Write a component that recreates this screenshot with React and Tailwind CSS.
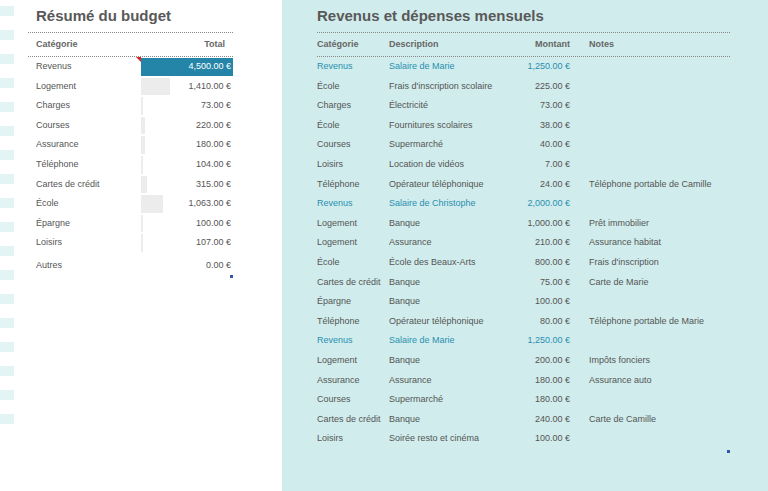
const left = [
  ["Revenus", 4500, "4,500.00 €"],
  ["Logement", 1410, "1,410.00 €"],
  ["Charges", 73, "73.00 €"],
  ["Courses", 220, "220.00 €"],
  ["Assurance", 180, "180.00 €"],
  ["Téléphone", 104, "104.00 €"],
  ["Cartes de crédit", 315, "315.00 €"],
  ["École", 1063, "1,063.00 €"],
  ["Épargne", 100, "100.00 €"],
  ["Loisirs", 107, "107.00 €"],
];
const right = [
  ["Revenus", "Salaire de Marie", "1,250.00 €", "", 1],
  ["École", "Frais d'inscription scolaire", "225.00 €", ""],
  ["Charges", "Électricité", "73.00 €", ""],
  ["École", "Fournitures scolaires", "38.00 €", ""],
  ["Courses", "Supermarché", "40.00 €", ""],
  ["Loisirs", "Location de vidéos", "7.00 €", ""],
  ["Téléphone", "Opérateur téléphonique", "24.00 €", "Téléphone portable de Camille"],
  ["Revenus", "Salaire de Christophe", "2,000.00 €", "", 1],
  ["Logement", "Banque", "1,000.00 €", "Prêt immobilier"],
  ["Logement", "Assurance", "210.00 €", "Assurance habitat"],
  ["École", "École des Beaux-Arts", "800.00 €", "Frais d'inscription"],
  ["Cartes de crédit", "Banque", "75.00 €", "Carte de Marie"],
  ["Épargne", "Banque", "100.00 €", ""],
  ["Téléphone", "Opérateur téléphonique", "80.00 €", "Téléphone portable de Marie"],
  ["Revenus", "Salaire de Marie", "1,250.00 €", "", 1],
  ["Logement", "Banque", "200.00 €", "Impôts fonciers"],
  ["Assurance", "Assurance", "180.00 €", "Assurance auto"],
  ["Courses", "Supermarché", "180.00 €", ""],
  ["Cartes de crédit", "Banque", "240.00 €", "Carte de Camille"],
  ["Loisirs", "Soirée resto et cinéma", "100.00 €", ""],
];
const F = { fontFamily: "Arial, 'Liberation Sans', sans-serif" };
export default function App() {
  return (
    <div className="w-[768px] h-[491px] flex bg-white overflow-hidden text-[9px] text-[#555]" style={F}>
      <div className="w-[16px] flex flex-col gap-[14px] pt-[6px]">
        {Array.from({ length: 18 }).map((_, i) => (
          <div key={i} className="h-[10px] w-[14px] bg-[#e3f4f4]" />
        ))}
      </div>
      <div className="w-[266px] pl-[12px] pr-[49px] pt-[6px]">
        <div className="text-[15px] font-bold text-[#595959] h-[26px] leading-[20px] pl-[8px]">Résumé du budget</div>
        <div className="border-t border-dotted border-[#888] flex justify-between font-bold h-[24px] items-center px-[8px] text-[#666]">
          <span>Catégorie</span><span>Total</span>
        </div>
        <div className="border-t border-dotted border-[#888]">
          {left.map(([c, v, s], i) => (
            <div key={c} className="flex h-[19.6px] items-center">
              <span className="w-[113px] pl-[8px]">{c}</span>
              <div className="relative flex-1 h-full flex items-center justify-end pr-[2px]">
                <div className={`absolute left-0 top-[1px] bottom-[1px] ${i === 0 ? "bg-[#2585a8]" : "bg-[#ececec]"}`} style={{ width: Math.max(2, (v / 4500) * 92) }} />
                {i === 0 && <div className="absolute left-[-5px] top-0 w-0 h-0 border-l-[5px] border-l-transparent border-t-[5px] border-t-[#d22]" />}
                <span className={`relative ${i === 0 ? "text-white" : ""}`}>{s}</span>
              </div>
            </div>
          ))}
          <div className="flex h-[26px] items-center">
            <span className="w-[113px] pl-[8px]">Autres</span>
            <div className="relative flex-1 text-right pr-[2px]">0.00 €<div className="absolute right-0 bottom-[-5px] w-[3px] h-[3px] bg-[#3355aa]" /></div>
          </div>
        </div>
      </div>
      <div className="flex-1 bg-[#d0ecec] pt-[6px] pl-[35px] pr-[38px]">
        <div className="text-[15px] font-bold text-[#595959] h-[26px] leading-[20px]">Revenus et dépenses mensuels</div>
        <div className="border-t border-dotted border-[#888] flex font-bold h-[24px] items-center text-[#666]">
          <span className="w-[72px]">Catégorie</span>
          <span className="w-[115px]">Description</span>
          <span className="w-[66px] text-right">Montant</span>
          <span className="pl-[19px]">Notes</span>
        </div>
        <div className="border-t border-dotted border-[#888] relative">
          {right.map(([c, d, m, n, rev], i) => (
            <div key={i} className={`flex h-[19.6px] items-center ${rev ? "text-[#2a8fb0]" : ""}`}>
              <span className="w-[72px]">{c}</span>
              <span className="w-[115px]">{d}</span>
              <span className="w-[66px] text-right">{m}</span>
              <span className="pl-[19px]">{n}</span>
            </div>
          ))}
          <div className="absolute right-0 bottom-[-4px] w-[3px] h-[3px] bg-[#3355aa]" />
        </div>
      </div>
    </div>
  );
}
